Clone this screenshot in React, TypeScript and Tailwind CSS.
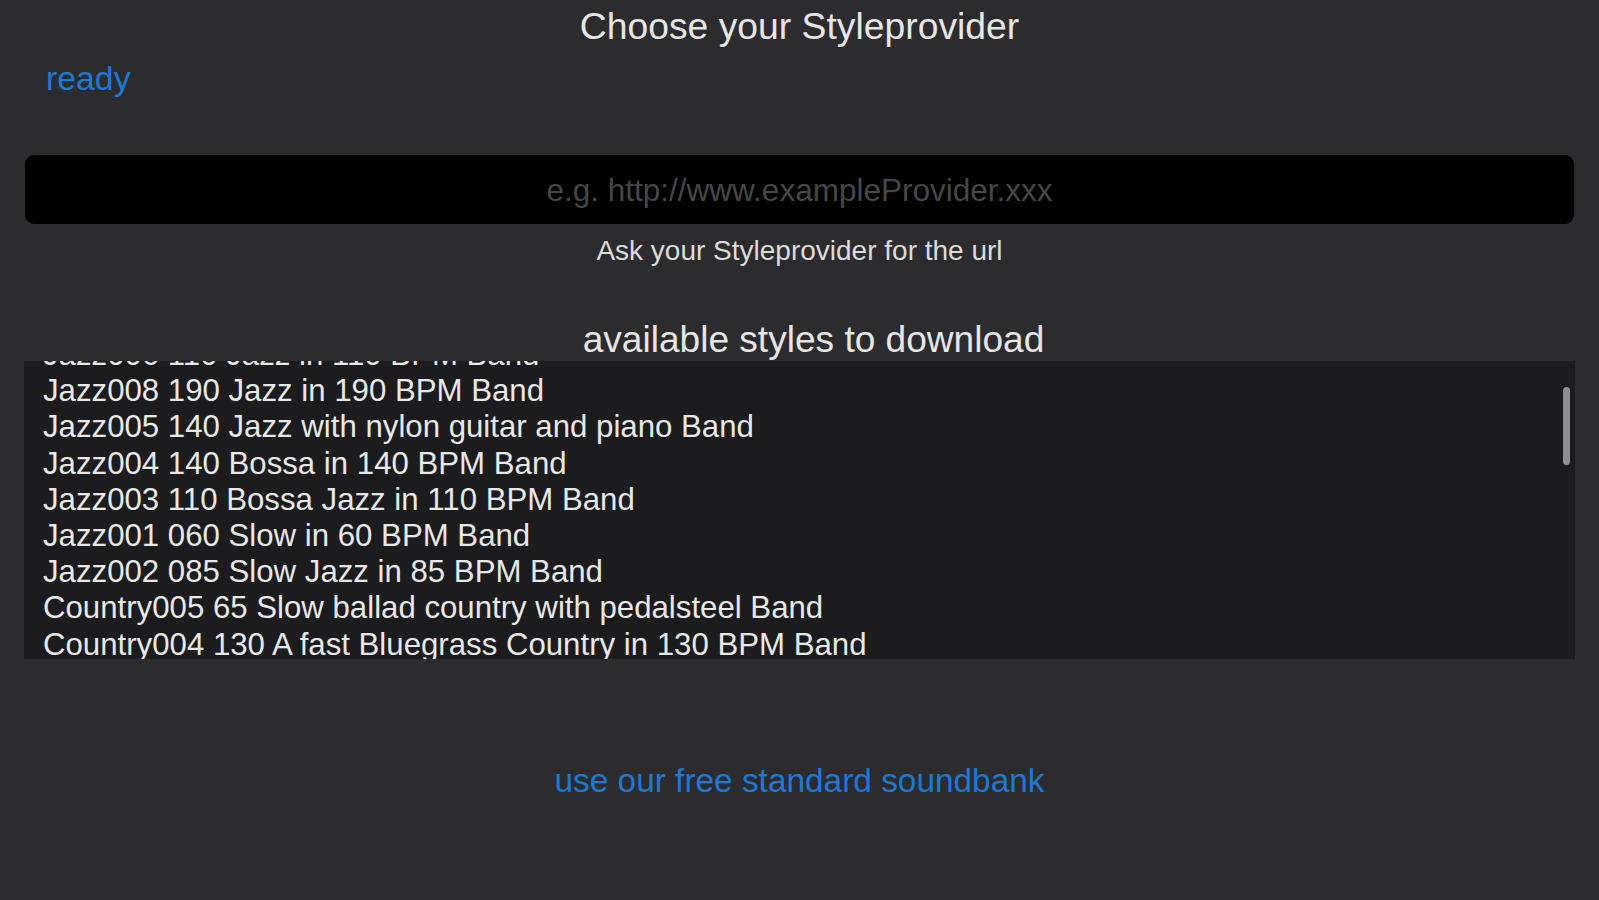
import React from "react";

const rows = [
  "Jazz006 110 Jazz in 110 BPM Band",
  "Jazz008 190 Jazz in 190 BPM Band",
  "Jazz005 140 Jazz with nylon guitar and piano Band",
  "Jazz004 140 Bossa in 140 BPM Band",
  "Jazz003 110 Bossa Jazz in 110 BPM Band",
  "Jazz001 060 Slow in 60 BPM Band",
  "Jazz002 085 Slow Jazz in 85 BPM Band",
  "Country005 65 Slow ballad country with pedalsteel Band",
  "Country004 130 A fast Bluegrass Country in 130 BPM Band",
];

export default function App() {
  return (
    <div
      className="w-full h-[900px] bg-[#2c2c2e] flex flex-col overflow-hidden"
      style={{ fontFamily: '"Liberation Sans", Arial, sans-serif' }}
    >
      <div className="pt-[4px] text-center text-[37.3px] leading-[44px] text-[#e6e6e6]">
        Choose your Styleprovider
      </div>
      <div className="mt-[10px] pl-[46px] text-[33.8px] leading-[40px] text-[#1c78d4]">
        ready
      </div>
      <div className="mt-[57px] mx-[25px] h-[69px] pt-[3px] rounded-[9px] bg-black flex items-center justify-center">
        <span className="text-[31.5px] text-[#464648]">
          e.g. http://www.exampleProvider.xxx
        </span>
      </div>
      <div className="mt-[11px] text-center text-[28px] leading-[32px] text-[#dcdcdc]">
        Ask your Styleprovider for the url
      </div>
      <div className="mt-[51px] text-center text-[37.1px] leading-[43px] text-[#e6e6e6] pl-[28px]">
        available styles to download
      </div>
      <div className="relative mx-[24px] h-[298px] bg-[#1c1c1e] overflow-hidden">
        <div className="-mt-[24px] pl-[19px]">
          {rows.map((r) => (
            <div key={r} className="text-[31.2px] leading-[36.2px] text-[#e8e8e8] whitespace-nowrap">
              {r}
            </div>
          ))}
        </div>
        <div className="absolute right-[5px] top-[26px] w-[7px] h-[78px] rounded-full bg-[#8e8e93]" />
      </div>
      <div className="mt-[102px] text-center text-[33.4px] leading-[40px] text-[#1c78d4]">
        use our free standard soundbank
      </div>
    </div>
  );
}
